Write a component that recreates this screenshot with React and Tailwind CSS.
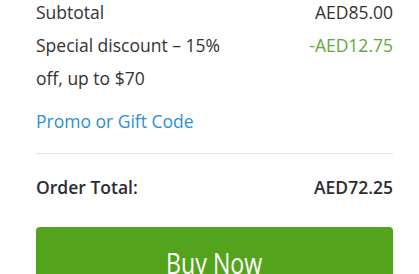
import React from 'react';

const OrderSummary = () => {
  const rows = [
    { label: 'Subtotal', value: 'AED85.00', valueClass: 'text-[#333333]' },
    { label: 'Special discount – 15% off, up to $70', value: '-AED12.75', valueClass: 'text-[#62a83e]' },
  ];

  return (
    <div className="h-[274px] overflow-hidden bg-white font-['Open_Sans',sans-serif] text-[#333333]">
      <div className="-mt-[4px] pl-[36px] pr-[26px]">
        {/* Line items */}
        <div className="flex flex-col">
          {rows.map((row, idx) => (
            <div key={idx} className="flex items-start justify-between text-[17.5px] leading-[33px]">
              <span className="w-[200px]">{row.label}</span>
              <span className={row.valueClass}>{row.value}</span>
            </div>
          ))}
        </div>

        {/* Promo */}
        <a href="#" className="mt-[10px] block text-[17.5px] leading-[33px] text-[#2d8fd8]">
          Promo or Gift Code
        </a>

        <div className="mt-[15px] h-px bg-[#e2e2e2]" />

        {/* Total */}
        <div className="mt-[17px] flex justify-between text-[17.5px] font-semibold leading-[33px] text-[#2b2b33]">
          <span>Order Total:</span>
          <span>AED72.25</span>
        </div>

        <button className="mt-[23px] flex h-[70px] w-full justify-center rounded-[4px] bg-[#53a31c] pt-[21px] text-white">
          <span className="inline-block scale-x-[0.8] text-[29px] leading-[29px]">Buy Now</span>
        </button>
      </div>
    </div>
  );
};

export default OrderSummary;
